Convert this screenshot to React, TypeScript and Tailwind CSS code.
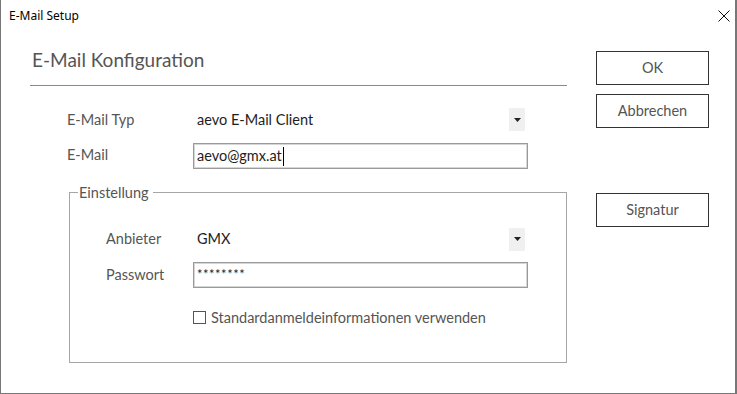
import React from 'react';

const font = "font-['Lato','Noto_Sans',sans-serif]";

function Combo({ value }: { value: string }) {
  return (
    <div className="flex h-[23px] w-[335px] items-center justify-between pl-[4px] pr-[3px]">
      <span className="text-[14.5px] text-[#1e1e1e]">{value}</span>
      <div className="flex h-[23px] w-[16px] items-center justify-center bg-[#f0f0f0]">
        <svg width="7" height="4" viewBox="0 0 7 4">
          <path d="M0 0h7L3.5 4z" fill="#222" />
        </svg>
      </div>
    </div>
  );
}

function TextBox({ children }: { children: React.ReactNode }) {
  return (
    <div className="flex h-[26px] w-[335px] items-center border border-[#9a9a9a] pl-[3px] shadow-[inset_0_0_0_1px_#d6d6d6]">
      {children}
    </div>
  );
}

function Btn({ label }: { label: string }) {
  return (
    <button className="flex h-[34px] w-[113px] items-center justify-center border border-[#333] text-[14.5px] text-[#555]">
      {label}
    </button>
  );
}

export default function App() {
  return (
    <div className={`w-[737px] h-[394px] bg-white border-l border-b border-r-2 border-[#777] ${font}`}>
      {/* title bar */}
      <div className="flex h-[31px] items-center justify-between pl-[8px] pr-[5px]">
        <span className="text-[12px] text-black font-['Noto_Sans',sans-serif]">E-Mail Setup</span>
        <svg width="12" height="12" viewBox="0 0 12 12">
          <path d="M0.5 0.5l11 11M11.5 0.5l-11 11" stroke="#111" strokeWidth="1" />
        </svg>
      </div>

      <div className="flex">
        {/* left */}
        <div className="w-[566px] pl-[29px]">
          <h1 className="mt-[15px] text-[19px] leading-[28px] text-[#555] pl-[2px]">E-Mail Konfiguration</h1>
          <div className="mt-[11px] h-px w-[537px] bg-[#8a8a8a]" />

          <div className="mt-[22px] grid grid-cols-[126px_335px] items-center gap-y-[12px] pl-[37px]">
            <span className="text-[14.5px] text-[#555]">E-Mail Typ</span>
            <Combo value="aevo E-Mail Client" />
            <span className="text-[14.5px] text-[#555] -mt-[3px]">E-Mail</span>
            <TextBox>
              <span className="text-[14.5px] text-[#1e1e1e]">aevo@gmx.at</span>
              <span className="ml-[1px] h-[19px] w-px bg-black" />
            </TextBox>
          </div>

          <fieldset className="ml-[39px] mt-[13px] h-[181px] w-[498px] border border-[#a6a6a6]">
            <legend className="ml-[8px] pl-[1px] pr-[4px] text-[14.5px] text-[#555]">Einstellung</legend>
            <div className="mt-[24px] grid grid-cols-[87px_335px] items-center gap-y-[11px] pl-[36px]">
              <span className="text-[14.5px] text-[#555]">Anbieter</span>
              <Combo value="GMX" />
              <span className="text-[14.5px] text-[#555]">Passwort</span>
              <TextBox>
                <span className="text-[13px] leading-none text-[#1e1e1e] tracking-[0.5px]">********</span>
              </TextBox>
              <span />
              <label className="mt-[8px] flex items-center gap-[5px]">
                <span className="h-[13px] w-[13px] border border-[#555] bg-white" />
                <span className="text-[14.5px] text-[#555]">Standardanmeldeinformationen verwenden</span>
              </label>
            </div>
          </fieldset>
        </div>

        {/* right */}
        <div className="ml-[29px] mt-[20px] flex flex-col">
          <Btn label="OK" />
          <div className="mt-[9px]">
            <Btn label="Abbrechen" />
          </div>
          <div className="mt-[65px]">
            <Btn label="Signatur" />
          </div>
        </div>
      </div>
    </div>
  );
}
